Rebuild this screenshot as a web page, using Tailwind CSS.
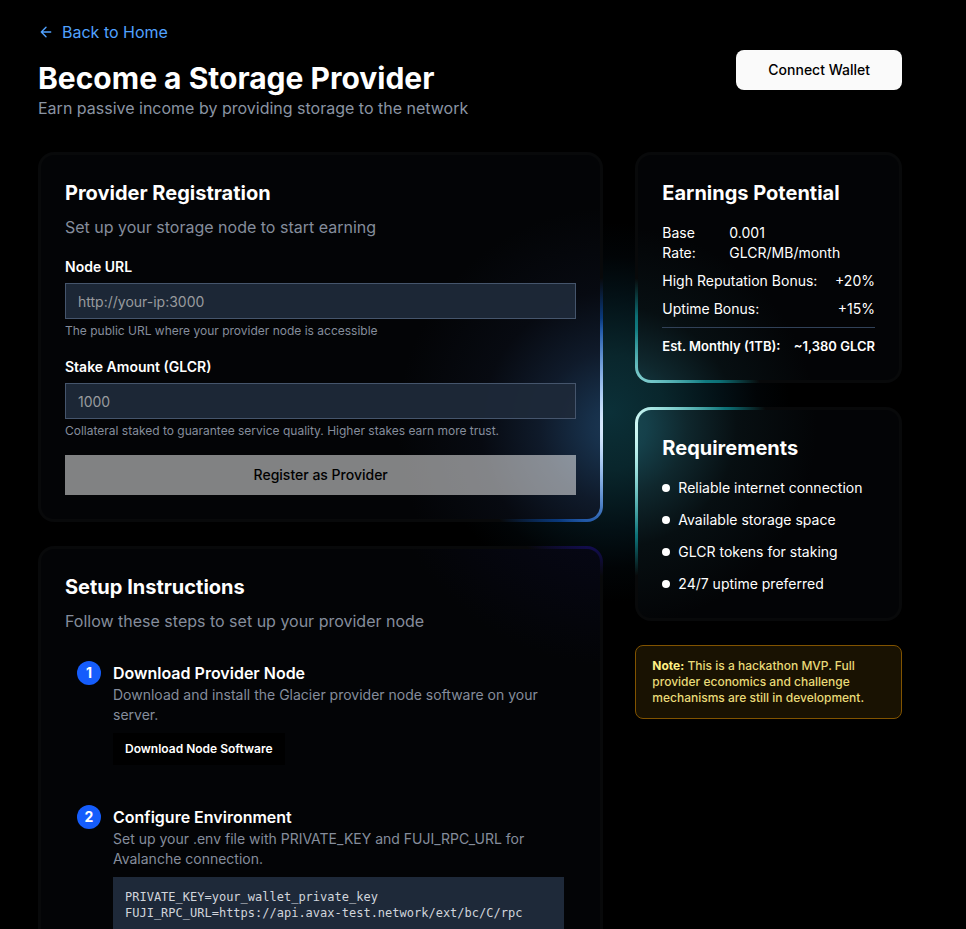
<!DOCTYPE html>
<html lang="en">
<head>
<meta charset="utf-8">
<meta name="viewport" content="width=device-width, initial-scale=1">
<title>Become a Storage Provider</title>
<script src="https://cdn.jsdelivr.net/npm/@tailwindcss/browser@4"></script>
</head>
<body class="min-h-screen bg-black font-['Inter',sans-serif] text-white">
<div class="min-h-screen bg-fixed bg-[radial-gradient(180px_190px_at_610px_412px,#0b3038,#09262c_30%,#031015_62%,#010406_82%,transparent)] pt-5 pr-16 pb-8 pl-[38px]">
  <header class="mb-8 flex items-center justify-between">
    <div>
      <a href="#" class="mb-4 flex items-center gap-2 text-base text-[#51a2ff]">
        <svg class="size-4" viewBox="0 0 16 16" fill="none" stroke="currentColor" stroke-width="1.4" stroke-linecap="round" stroke-linejoin="round" aria-hidden="true"><path d="M12.7 8H3.3M8 3.3 3.3 8 8 12.7"/></svg>
        Back to Home
      </a>
      <h1 class="text-3xl/9 font-bold">Become a Storage Provider</h1>
      <p class="text-base text-[#8a94a3]">Earn passive income by providing storage to the network</p>
    </div>
    <button type="button" class="h-10 rounded-lg bg-[#fafafa] px-8 text-sm font-medium text-black">Connect Wallet</button>
  </header>

  <main class="grid grid-cols-3 items-start gap-8">
    <div class="col-span-2 flex flex-col gap-6">
      <section class="rounded-2xl bg-[#08090a] bg-fixed bg-[radial-gradient(110px_110px_at_617px_427px,#fffffff0,transparent),radial-gradient(150px_150px_at_617px_427px,#2e8cff,#0a48a0_65%,transparent)] p-[3px]">
        <div class="rounded-[13px] bg-[#030406] bg-fixed bg-[radial-gradient(220px_220px_at_617px_427px,#1d3955,#17304a_12%,#0f1a2a_35%,#070a11_62%,transparent)] p-6">
          <h2 class="text-xl/7 font-bold">Provider Registration</h2>
          <p class="mt-2 text-base text-[#858d9c]">Set up your storage node to start earning</p>
          <form class="mt-[18px]">
            <label for="node" class="block text-sm font-semibold">Node URL</label>
            <input id="node" type="text" placeholder="http://your-ip:3000" class="mt-1.5 h-9 w-full border border-[#45556c] bg-[#1e2939]/95 px-3 text-sm placeholder:text-[#999b9e]">
            <p class="mt-1 text-xs text-[#858d9c]">The public URL where your provider node is accessible</p>
            <label for="stake" class="mt-[18px] block text-sm font-semibold">Stake Amount (GLCR)</label>
            <input id="stake" type="text" placeholder="1000" class="mt-1.5 h-9 w-full border border-[#45556c] bg-[#1e2939]/95 px-3 text-sm placeholder:text-[#999b9e]">
            <p class="mt-1 text-xs text-[#858d9c]">Collateral staked to guarantee service quality. Higher stakes earn more trust.</p>
            <button type="submit" disabled class="mt-4 h-10 w-full bg-white/50 text-sm font-medium text-black">Register as Provider</button>
          </form>
        </div>
      </section>

      <section class="rounded-2xl bg-[#08090a] bg-fixed bg-[radial-gradient(150px_150px_at_617px_427px,#2214b0,#160e68_75%,transparent)] p-[3px]">
        <div class="rounded-[13px] bg-[#030406] bg-fixed bg-[radial-gradient(240px_240px_at_617px_427px,#090a1c,#060714_50%,transparent)] p-6">
          <h2 class="text-xl/7 font-bold">Setup Instructions</h2>
          <p class="mt-2 text-base text-[#858d9c]">Follow these steps to set up your provider node</p>
          <ol class="mt-4 flex flex-col gap-4">
            <li class="flex gap-3 p-3">
              <span class="flex size-6 shrink-0 items-center justify-center rounded-full bg-[#155dfc] text-sm font-bold">1</span>
              <div class="min-w-0 flex-1">
                <h3 class="text-base font-semibold">Download Provider Node</h3>
                <p class="text-sm text-[#858d9c]">Download and install the Glacier provider node software on your server.</p>
                <button type="button" class="mt-2 block h-8 bg-black px-3 text-xs font-semibold">Download Node Software</button>
              </div>
            </li>
            <li class="flex gap-3 p-3">
              <span class="flex size-6 shrink-0 items-center justify-center rounded-full bg-[#155dfc] text-sm font-bold">2</span>
              <div class="min-w-0 flex-1">
                <h3 class="text-base font-semibold">Configure Environment</h3>
                <p class="text-sm text-[#858d9c]">Set up your .env file with PRIVATE_KEY and FUJI_RPC_URL for Avalanche connection.</p>
                <pre class="mt-2 bg-[#1e2939] p-3 font-['DejaVu_Sans_Mono',monospace] text-xs text-[#d1d5dc]">PRIVATE_KEY=your_wallet_private_key
FUJI_RPC_URL=https://api.avax-test.network/ext/bc/C/rpc</pre>
              </div>
            </li>
          </ol>
        </div>
      </section>
    </div>

    <aside class="flex flex-col gap-6">
      <section class="rounded-2xl bg-[#08090a] bg-fixed bg-[radial-gradient(100px_100px_at_617px_427px,#ffffffe0,transparent),radial-gradient(150px_150px_at_617px_427px,#35d8d8,#0c6f75_75%,transparent)] p-[3px]">
        <div class="rounded-[13px] bg-[#030406] bg-fixed bg-[radial-gradient(200px_200px_at_617px_427px,#1a4a52,#15404a_15%,#0f272d_35%,#070f12_60%,transparent)] p-6">
          <h2 class="text-xl/7 font-bold">Earnings Potential</h2>
          <dl class="mt-4 flex flex-col gap-2 text-sm">
            <div class="flex"><dt class="w-[67px] shrink-0">Base<br>Rate:</dt><dd>0.001 GLCR/MB/month</dd></div>
            <div class="flex justify-between whitespace-nowrap"><dt>High Reputation Bonus:</dt><dd>+20%</dd></div>
            <div class="flex justify-between whitespace-nowrap"><dt>Uptime Bonus:</dt><dd>+15%</dd></div>
            <div class="flex justify-between border-t border-[#314158] pt-2 text-[13px]/5 font-semibold whitespace-nowrap"><dt>Est. Monthly (1TB):</dt><dd>~1,380 GLCR</dd></div>
          </dl>
        </div>
      </section>

      <section class="rounded-2xl bg-[#08090a] bg-fixed bg-[radial-gradient(110px_110px_at_617px_427px,#ffffffe8,transparent),radial-gradient(150px_150px_at_617px_427px,#48f0e4,#0c6f75_75%,transparent)] p-[3px]">
        <div class="rounded-[13px] bg-[#030406] bg-fixed bg-[radial-gradient(200px_200px_at_617px_427px,#1a4a52,#15404a_15%,#0f272d_35%,#070f12_60%,transparent)] p-6">
          <h2 class="text-xl/7 font-bold">Requirements</h2>
          <ul class="mt-4 flex flex-col gap-3 text-sm">
            <li class="flex items-center gap-2"><span class="size-2 rounded-full bg-white"></span>Reliable internet connection</li>
            <li class="flex items-center gap-2"><span class="size-2 rounded-full bg-white"></span>Available storage space</li>
            <li class="flex items-center gap-2"><span class="size-2 rounded-full bg-white"></span>GLCR tokens for staking</li>
            <li class="flex items-center gap-2"><span class="size-2 rounded-full bg-white"></span>24/7 uptime preferred</li>
          </ul>
        </div>
      </section>

      <p class="rounded-lg border border-[#815300] bg-[#191202] px-4 py-3 text-xs font-medium text-[#e9da78]"><strong class="font-bold text-[#fff085]">Note:</strong> This is a hackathon MVP. Full provider economics and challenge mechanisms are still in development.</p>
    </aside>
  </main>
</div>
</body>
</html>
